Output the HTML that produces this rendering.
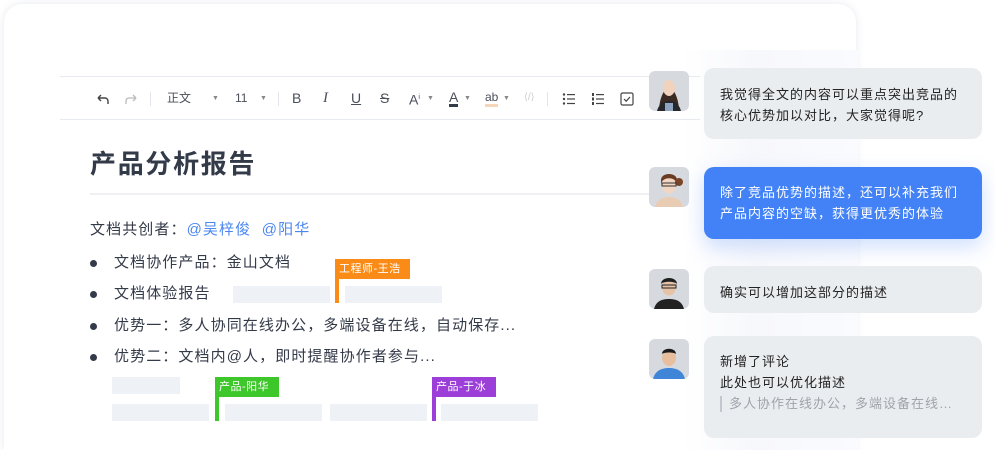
<!DOCTYPE html>
<html style="overflow:hidden"><head><meta charset="utf-8"><style>
*{margin:0;padding:0;box-sizing:border-box}
html,body{width:995px;height:450px;overflow:hidden}
body{background:#fff;position:relative;font-family:"Liberation Sans","Noto Sans CJK SC",sans-serif;color:#333a48}
.card{position:absolute;left:4px;top:4px;width:852px;height:446px;background:#fff;border-radius:18px 18px 0 0;box-shadow:0 0 8px rgba(200,205,220,.45)}
.abs{position:absolute}
.tb{position:absolute;left:60px;top:76px;width:640px;height:44px;border-top:1px solid #e6e9ee;border-bottom:1px solid #e6e9ee}
.ti{position:absolute;top:13px;font-size:12px;color:#4a4f5a;line-height:16px}
.sep{position:absolute;top:15px;width:1px;height:14px;background:#e3e5ea}
.dd{font-size:7px;color:#888}
.ph{position:absolute;background:#eef1f6;height:17px}
.tag{position:absolute;color:#fff;font-size:11px;height:20px;line-height:20px;padding-left:4px;letter-spacing:.5px}
.stem{position:absolute;width:4px}
.li{position:absolute;left:114px;font-size:15px;line-height:20px;letter-spacing:1.1px}
.dot{position:absolute;left:90px;width:7px;height:7px;border-radius:50%;background:#333a48}
.bub{position:absolute;left:704px;width:278px;background:#eaedf0;border-radius:10px;font-size:13px;line-height:21px;color:#222;padding-left:16px;letter-spacing:1px}
.av{position:absolute;left:649px;width:40px;height:40px;border-radius:6px;overflow:hidden;background:#d6dadf}
.panel{position:absolute;left:683px;top:50px;width:175px;height:400px;background:linear-gradient(90deg,rgba(246,247,252,.0),#f7f8fc 40%,#fafbfe)}
</style></head><body>
<div class="card"></div>
<div class="panel"></div>
<div class="tb">
 <svg class="abs" style="left:36px;top:15px" width="14" height="14" viewBox="0 0 14 14"><path d="M2 6h7a3 3 0 0 1 3 3v3M2 6l3-3M2 6l3 3" fill="none" stroke="#444" stroke-width="1.4"/></svg>
 <svg class="abs" style="left:64px;top:15px" width="14" height="14" viewBox="0 0 14 14"><path d="M12 6H5a3 3 0 0 0-3 3v3M12 6L9 3M12 6L9 9" fill="none" stroke="#bbb" stroke-width="1.3"/></svg>
 <div class="sep" style="left:90px"></div>
 <div class="ti" style="left:107px">正文</div><div class="ti dd" style="left:152px;top:14px">▼</div>
 <div class="ti" style="left:175px">11</div><div class="ti dd" style="left:200px;top:14px">▼</div>
 <div class="sep" style="left:218px"></div>
 <div class="ti" style="left:232px;font-size:14px">B</div>
 <div class="ti" style="left:263px;font-family:'Liberation Serif';font-style:italic;font-size:15px">I</div>
 <div class="ti" style="left:291px;text-decoration:underline;font-size:14px">U</div>
 <div class="ti" style="left:320px;text-decoration:line-through;font-size:14px">S</div>
 <div class="ti" style="left:349px;font-size:14px">A<sup style="font-size:7px">i</sup></div><div class="ti dd" style="left:367px;top:14px">▼</div>
 <div class="ti" style="left:389px;font-size:14px;border-bottom:3px solid #333a48;line-height:14px">A</div><div class="ti dd" style="left:404px;top:14px">▼</div>
 <div class="ti" style="left:425px;font-size:12px;border-bottom:3px solid #f6d5b8;line-height:14px">ab</div><div class="ti dd" style="left:443px;top:14px">▼</div>
 <div class="ti" style="left:464px;color:#ccc;font-size:10px">⟨/⟩</div>
 <div class="sep" style="left:487px"></div>
 <svg class="abs" style="left:502px;top:15px" width="14" height="14" viewBox="0 0 14 14" fill="#444"><circle cx="2" cy="2.5" r="1.2"/><circle cx="2" cy="7" r="1.2"/><circle cx="2" cy="11.5" r="1.2"/><rect x="5" y="2" width="8" height="1.2"/><rect x="5" y="6.4" width="8" height="1.2"/><rect x="5" y="10.9" width="8" height="1.2"/></svg>
 <svg class="abs" style="left:531px;top:15px" width="14" height="14" viewBox="0 0 14 14" fill="#444"><rect x="1" y="1" width="2" height="3"/><rect x="1" y="5.5" width="2" height="3"/><rect x="1" y="10" width="2" height="3"/><rect x="5" y="2" width="8" height="1.2"/><rect x="5" y="6.4" width="8" height="1.2"/><rect x="5" y="10.9" width="8" height="1.2"/></svg>
 <svg class="abs" style="left:560px;top:15px" width="14" height="14" viewBox="0 0 14 14"><rect x="1" y="1" width="12" height="12" rx="1.5" fill="none" stroke="#444" stroke-width="1.2"/><path d="M4 7l2.2 2.2L10 5" fill="none" stroke="#444" stroke-width="1.2"/></svg>
</div>
<div class="abs" style="left:90px;top:147px;font-size:26px;font-weight:bold;line-height:34px;color:#333a48;letter-spacing:1.7px">产品分析报告</div>
<div class="abs" style="left:90px;top:193px;width:590px;height:2px;background:#eef0f4"></div>
<div class="abs" style="left:90px;top:220px;font-size:15px;line-height:20px;letter-spacing:1.1px">文档共创者：<span style="color:#4b87f0">@吴梓俊</span>&nbsp;&nbsp;<span style="color:#4b87f0">@阳华</span></div>
<div class="dot" style="top:260px"></div><div class="li" style="top:253px">文档协作产品：金山文档</div>
<div class="dot" style="top:291px"></div><div class="li" style="top:284px">文档体验报告</div>
<div class="dot" style="top:323px"></div><div class="li" style="top:316px">优势一：多人协同在线办公，多端设备在线，自动保存...</div>
<div class="dot" style="top:354px"></div><div class="li" style="top:347px">优势二：文档内@人，即时提醒协作者参与...</div>
<div class="ph" style="left:233px;top:286px;width:97px"></div>
<div class="ph" style="left:345px;top:286px;width:97px"></div>
<div class="tag" style="left:335px;top:259px;width:75px;background:#f98b16">工程师-王浩</div>
<div class="stem" style="left:335px;top:259px;height:44px;background:#f98b16"></div>
<div class="ph" style="left:112px;top:377px;width:68px"></div>
<div class="ph" style="left:112px;top:404px;width:97px"></div>
<div class="ph" style="left:225px;top:404px;width:97px"></div>
<div class="ph" style="left:330px;top:404px;width:97px"></div>
<div class="ph" style="left:441px;top:404px;width:97px"></div>
<div class="tag" style="left:215px;top:377px;width:64px;background:#3ec72a">产品-阳华</div>
<div class="stem" style="left:215px;top:377px;height:44px;background:#3ec72a"></div>
<div class="tag" style="left:432px;top:377px;width:64px;background:#9b3fd8">产品-于冰</div>
<div class="stem" style="left:432px;top:377px;height:44px;background:#9b3fd8"></div>

<div class="av" style="top:71px"><svg width="40" height="40"><path d="M10 40c0-10 4-22 10-24 6 2 10 14 10 24z" fill="#3a2a22"/><ellipse cx="20" cy="17" rx="6" ry="8" fill="#f0d2bd"/><path d="M8 40c2-8 8-10 12-10s10 2 12 10z" fill="#26272b"/><path d="M16 32h8v8h-8z" fill="#8fa6c2"/></svg></div>
<div class="av" style="top:167px"><svg width="40" height="40"><path d="M6 40c2-8 8-10 14-10s12 2 14 10z" fill="#e8cdb4"/><ellipse cx="20" cy="18" rx="7" ry="8.5" fill="#f2d6c2"/><path d="M12 18c0-9 16-9 16 0v-5c0-8-16-8-16 0z" fill="#6a3a22"/><circle cx="30" cy="15" r="4" fill="#7a4526"/><rect x="13" y="16" width="14" height="3" fill="none" stroke="#333" stroke-width="1"/></svg></div>
<div class="av" style="top:269px"><svg width="40" height="40"><path d="M5 40c2-8 8-10 15-10s13 2 15 10z" fill="#222"/><ellipse cx="20" cy="18" rx="7" ry="8.5" fill="#e6c2a6"/><path d="M12 15c0-8 16-8 16 0c-2-3-14-3-16 0z" fill="#1f1f1f"/><rect x="13" y="16" width="14" height="3" fill="none" stroke="#222" stroke-width="1"/></svg></div>
<div class="av" style="top:339px"><svg width="40" height="40"><path d="M4 40c2-8 8-11 16-11s14 3 16 11z" fill="#3f86d8"/><ellipse cx="20" cy="19" rx="7" ry="8" fill="#e7bf9e"/><path d="M13 15c0-7 14-7 14 0c-2-2-12-2-14 0z" fill="#1c1c1c"/></svg></div>

<div class="bub" style="top:68px;height:71px;padding-top:16px">我觉得全文的内容可以重点突出竞品的<br>核心优势加以对比，大家觉得呢?</div>
<div class="bub" style="top:167px;height:72px;padding-top:15px;background:#4282f6;color:#fff;box-shadow:0 8px 20px rgba(66,130,246,.25)">除了竞品优势的描述，还可以补充我们<br>产品内容的空缺，获得更优秀的体验</div>
<div class="bub" style="top:266px;height:47px;padding-top:16px">确实可以增加这部分的描述</div>
<div class="bub" style="top:336px;height:102px;padding-top:15px">新增了评论<br>此处也可以优化描述<br><span style="display:inline-block;margin-top:3px;border-left:2px solid #c4c8ce;padding-left:7px;color:#a0a4aa;line-height:16px">多人协作在线办公，多端设备在线…</span></div>
</body></html>
